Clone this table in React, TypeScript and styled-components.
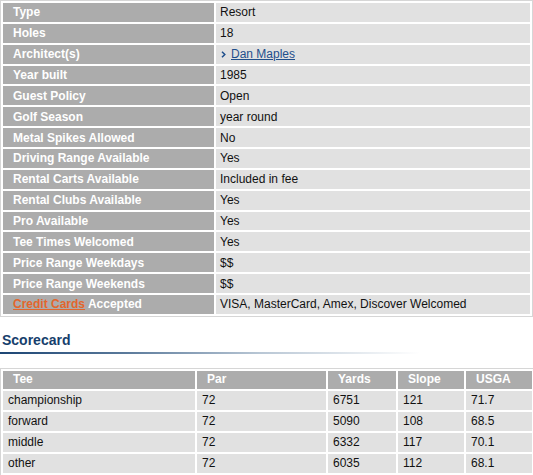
import React from "react";
import styled, { createGlobalStyle } from "styled-components";

const GlobalStyle = createGlobalStyle`
  html, body {
    margin: 0;
    padding: 0;
    background: #ffffff;
    overflow: hidden;
  }
  body {
    font-family: "Liberation Sans", Arial, sans-serif;
    font-size: 12px;
  }
`;

const Page = styled.div`
  width: 535px;
  display: flex;
  flex-direction: column;
`;

const InfoTable = styled.table`
  width: 533px;
  border: 1px solid #d6d6d6;
  border-collapse: separate;
  border-spacing: 2px;
  table-layout: fixed;
`;

const LabelCell = styled.td`
  width: 201px;
  height: 18.86px;
  padding: 0 0 0 10px;
  background: #acacac;
  color: #ffffff;
  font-weight: bold;
  font-size: 12px;
  line-height: 18px;
  white-space: nowrap;
`;

const ValueCell = styled.td`
  height: 18.86px;
  padding: 0 0 0 4px;
  background: #e1e1e1;
  color: #111111;
  font-size: 12px;
  line-height: 18px;
  white-space: nowrap;
`;

const Chevron = styled.svg`
  width: 5px;
  height: 7px;
  margin: 0 5px 0 1px;
  vertical-align: 0px;
`;

const ArchitectLink = styled.a`
  color: #1f4f8c;
  text-decoration: underline;
`;

const CardsLink = styled.a`
  color: #e2662c;
  text-decoration: underline;
`;

const Heading = styled.div`
  margin-top: 14px;
  padding-left: 2px;
  font-size: 14px;
  font-weight: bold;
  color: #163e6c;
  line-height: 18px;
`;

const Rule = styled.div`
  margin-top: 3px;
  width: 420px;
  height: 2px;
  background: linear-gradient(to right, #1c4574 0%, #5b7a9b 30%, #b9c7d5 62%, #ffffff 100%);
`;

const ScoreTable = styled.table`
  width: 535px;
  margin-top: 14px;
  border: 1px solid #d6d6d6;
  border-collapse: separate;
  border-spacing: 2px;
  table-layout: fixed;
`;

const HeadCell = styled.th<{ $w?: number }>`
  ${(p) => (p.$w ? `width: ${p.$w}px;` : "")}
  height: 18px;
  padding: 0 0 0 10px;
  background: #acacac;
  color: #ffffff;
  font-weight: bold;
  font-size: 12px;
  text-align: left;
  line-height: 17px;
`;

const DataCell = styled.td`
  height: 19px;
  padding: 0 0 0 5px;
  background: #e1e1e1;
  color: #111111;
  font-size: 12px;
  line-height: 19px;
`;

type Row = { label: React.ReactNode; value: React.ReactNode };

const rows: Row[] = [
  { label: "Type", value: "Resort" },
  { label: "Holes", value: "18" },
  {
    label: "Architect(s)",
    value: (
      <>
        <Chevron viewBox="0 0 5 7">
          <path d="M1 0.8 L3.8 3.5 L1 6.2" fill="none" stroke="#1f4f8c" strokeWidth="1.5" />
        </Chevron>
        <ArchitectLink href="#">Dan Maples</ArchitectLink>
      </>
    ),
  },
  { label: "Year built", value: "1985" },
  { label: "Guest Policy", value: "Open" },
  { label: "Golf Season", value: "year round" },
  { label: "Metal Spikes Allowed", value: "No" },
  { label: "Driving Range Available", value: "Yes" },
  { label: "Rental Carts Available", value: "Included in fee" },
  { label: "Rental Clubs Available", value: "Yes" },
  { label: "Pro Available", value: "Yes" },
  { label: "Tee Times Welcomed", value: "Yes" },
  { label: "Price Range Weekdays", value: "$$" },
  { label: "Price Range Weekends", value: "$$" },
  {
    label: (
      <>
        <CardsLink href="#">Credit Cards</CardsLink> Accepted
      </>
    ),
    value: "VISA, MasterCard, Amex, Discover Welcomed",
  },
];

const scores = [
  ["championship", "72", "6751", "121", "71.7"],
  ["forward", "72", "5090", "108", "68.5"],
  ["middle", "72", "6332", "117", "70.1"],
  ["other", "72", "6035", "112", "68.1"],
];

export default function App() {
  return (
    <Page>
      <GlobalStyle />
      <InfoTable>
        <tbody>
          {rows.map((r, i) => (
            <tr key={i}>
              <LabelCell>{r.label}</LabelCell>
              <ValueCell>{r.value}</ValueCell>
            </tr>
          ))}
        </tbody>
      </InfoTable>
      <Heading>Scorecard</Heading>
      <Rule />
      <ScoreTable>
        <thead>
          <tr>
            <HeadCell $w={182}>Tee</HeadCell>
            <HeadCell $w={119}>Par</HeadCell>
            <HeadCell $w={58}>Yards</HeadCell>
            <HeadCell $w={56}>Slope</HeadCell>
            <HeadCell>USGA</HeadCell>
          </tr>
        </thead>
        <tbody>
          {scores.map((s) => (
            <tr key={s[0]}>
              {s.map((c, j) => (
                <DataCell key={j}>{c}</DataCell>
              ))}
            </tr>
          ))}
        </tbody>
      </ScoreTable>
    </Page>
  );
}
